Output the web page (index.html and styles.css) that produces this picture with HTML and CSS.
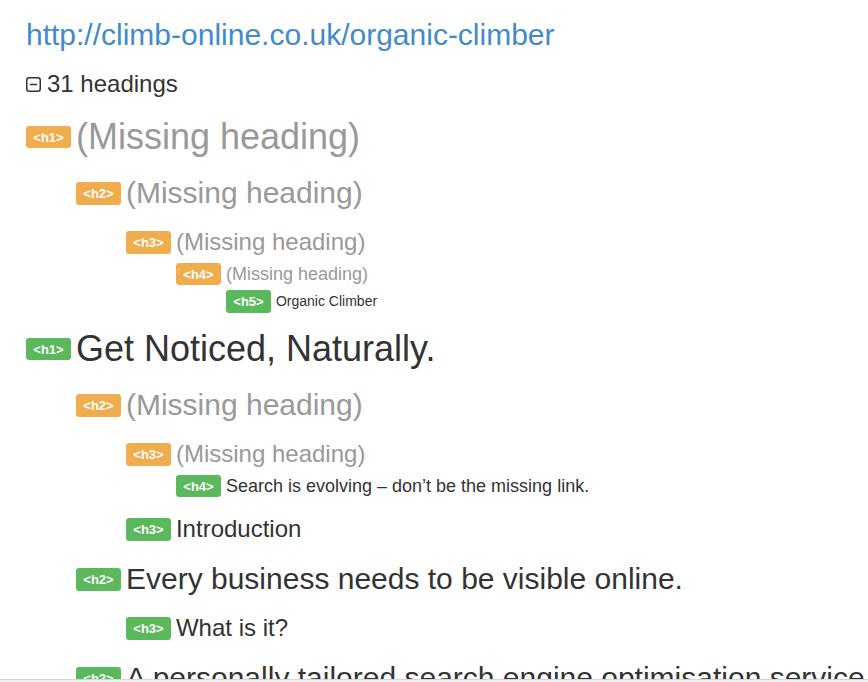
FILE: index.html
```html
<!DOCTYPE html>
<html lang="en">
<head>
<meta charset="utf-8">
<title>Headings outline</title>
<link rel="stylesheet" href="styles.css">
</head>
<body>
<div class="page">
  <h2 class="url"><a href="#">http://climb-online.co.uk/organic-climber</a></h2>
  <h3 class="toggle"><svg class="toggle-icon" width="15" height="15" viewBox="0 0 15 15"><rect x="0.75" y="0.75" width="13.5" height="13.5" rx="2.5" fill="none" stroke="#333" stroke-width="1.5"/><line x1="4" y1="7.5" x2="11" y2="7.5" stroke="#333" stroke-width="1.5"/></svg>31 headings</h3>
  <div class="outline">
    <h1 class="hd l1 missing"><span class="badge warn">&lt;h1&gt;</span>(Missing heading)</h1>
    <h2 class="hd l2 missing"><span class="badge warn">&lt;h2&gt;</span>(Missing heading)</h2>
    <h3 class="hd l3 missing"><span class="badge warn">&lt;h3&gt;</span>(Missing heading)</h3>
    <h4 class="hd l4 missing"><span class="badge warn">&lt;h4&gt;</span>(Missing heading)</h4>
    <h5 class="hd l5"><span class="badge ok">&lt;h5&gt;</span>Organic Climber</h5>
    <h1 class="hd l1"><span class="badge ok">&lt;h1&gt;</span>Get Noticed, Naturally.</h1>
    <h2 class="hd l2 missing"><span class="badge warn">&lt;h2&gt;</span>(Missing heading)</h2>
    <h3 class="hd l3 missing"><span class="badge warn">&lt;h3&gt;</span>(Missing heading)</h3>
    <h4 class="hd l4"><span class="badge ok">&lt;h4&gt;</span>Search is evolving – don’t be the missing link.</h4>
    <h3 class="hd l3"><span class="badge ok">&lt;h3&gt;</span>Introduction</h3>
    <h2 class="hd l2"><span class="badge ok">&lt;h2&gt;</span>Every business needs to be visible online.</h2>
    <h3 class="hd l3"><span class="badge ok">&lt;h3&gt;</span>What is it?</h3>
    <h2 class="hd l2"><span class="badge ok">&lt;h2&gt;</span>A personally tailored search engine optimisation service</h2>
    <h3 class="hd l3"><span class="badge ok">&lt;h3&gt;</span>How does it work?</h3>
  </div>
</div>
<div class="hscroll"></div>
</body>
</html>
```
FILE: styles.css
```css
html, body {
  margin: 0;
  padding: 0;
  overflow: hidden;
  background: #fff;
}
body {
  font-family: "Liberation Sans", Arial, sans-serif;
  color: #333;
  font-size: 14px;
}
.page {
  padding: 0 0 0 26px;
  white-space: nowrap;
}
h1, h2, h3, h4, h5, h6 {
  font-weight: 500;
}
h1, h2, h3 { margin: 20px 0 10px; }
h4, h5, h6 { margin: 10px 0 10px; }
h1 { font-size: 36px; line-height: 39px; }
h2 { font-size: 30px; line-height: 33px; }
h3 { font-size: 24px; line-height: 26px; }
h4 { font-size: 18px; line-height: 19px; }
h5 { font-size: 14px; line-height: 15px; }
.url { margin-top: 18px; }
.url a {
  color: #428bca;
  text-decoration: none;
}
.toggle { line-height: 26.4px; }
.toggle-icon {
  display: inline-block;
  vertical-align: baseline;
  margin-right: 6px;
}
.l2 { margin-left: 50px; }
.l3 { margin-left: 100px; }
.l4 { margin-left: 150px; }
.l5 { margin-left: 200px; }
.missing { color: #999; }
.badge {
  font-size: 13px;
  font-weight: bold;
  line-height: 1;
  color: #fff;
  padding: 3.5px 7.3px 4px;
  margin-right: 5px;
  border-radius: 3.25px;
}
h1 .badge { vertical-align: 8px; }
h2 .badge { vertical-align: 5.5px; }
h3 .badge { vertical-align: 3.5px; }
h4 .badge { vertical-align: 2px; }
h5 .badge { vertical-align: 0.5px; }
.warn { background: #f0ad4e; }
.ok { background: #5cb85c; }
.hscroll {
  position: fixed;
  left: 0;
  right: 0;
  bottom: 0;
  height: 2px;
  border-top: 1px solid #d6d6d6;
  background: #f0f0f0;
}
```
